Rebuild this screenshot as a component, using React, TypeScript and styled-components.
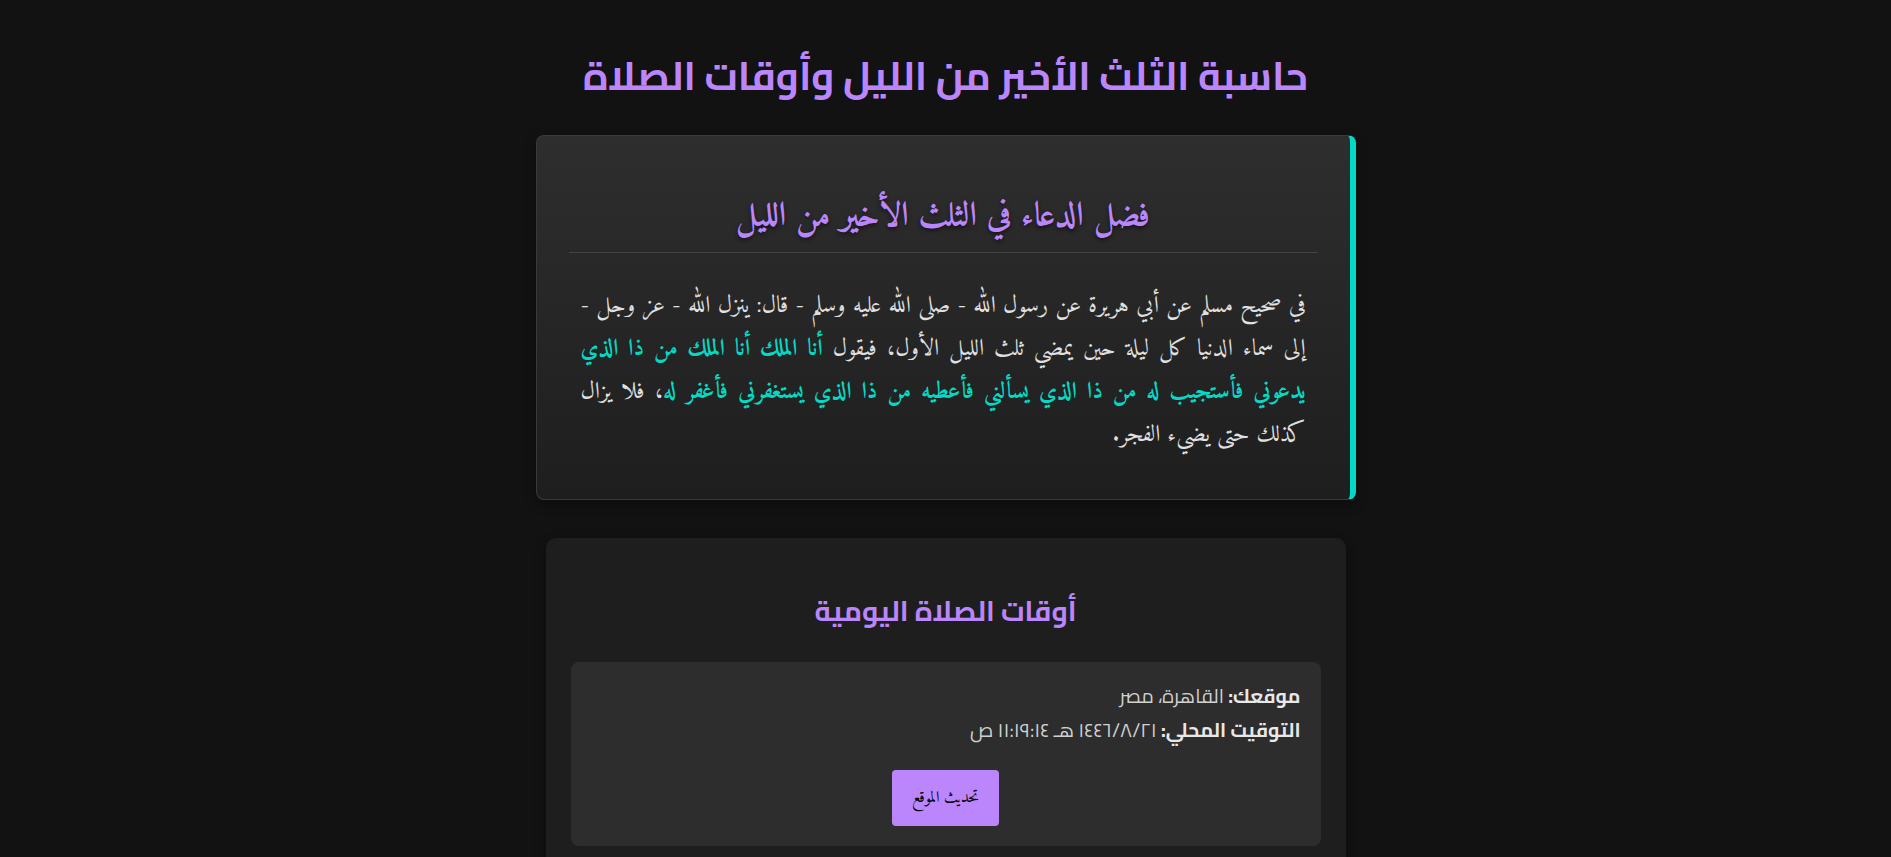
import React from "react";
import styled, { createGlobalStyle } from "styled-components";

const GlobalStyle = createGlobalStyle`
  html, body {
    margin: 0;
    padding: 0;
    background: #121212;
  }
  body {
    color: #e0e0e0;
    font-family: "Cairo", "Noto Sans Arabic", sans-serif;
    direction: rtl;
  }
  * { box-sizing: border-box; }
`;

const Page = styled.main`
  padding: 20px;
  display: flex;
  flex-direction: column;
  align-items: center;
`;

const Title = styled.h1`
  font-family: "Cairo", "Noto Sans Arabic", sans-serif;
  font-weight: 700;
  font-size: 39.5px;
  line-height: 54px;
  color: #bb86fc;
  margin: 29px 0 32px;
  text-align: center;
`;

const HadithCard = styled.section`
  width: 820px;
  padding: 32px;
  background: linear-gradient(180deg, #2e2e2e 0%, #1e1e1e 100%);
  border: 1px solid #3a3a3a;
  border-right: 6px solid #03dac6;
  border-radius: 8px;
  box-shadow: 0 4px 12px rgba(0, 0, 0, 0.35);
`;

const HadithHeading = styled.h2`
  font-family: "Amiri", "Noto Naskh Arabic", serif;
  font-weight: 700;
  font-size: 34px;
  line-height: 48px;
  color: #bb86fc;
  text-align: center;
  margin: 25px 0 0;
  padding-bottom: 11px;
  border-bottom: 1px solid #444;
  text-shadow: 0 2px 4px rgba(0, 0, 0, 0.5);
`;

const HadithText = styled.p`
  font-family: "Amiri", "Noto Naskh Arabic", serif;
  font-size: 23.6px;
  line-height: 43px;
  color: #e0e0e0;
  text-align: justify;
  margin: 32px 0 10px;
  padding: 0 12px;
`;

const Highlight = styled.span`
  color: #03dac6;
  font-weight: 700;
`;

const PrayerCard = styled.section`
  width: 800px;
  margin-top: 38px;
  padding: 25px;
  background: #1e1e1e;
  border-radius: 10px;
  box-shadow: 0 4px 12px rgba(0, 0, 0, 0.3);
`;

const PrayerHeading = styled.h2`
  font-family: "Cairo", "Noto Sans Arabic", sans-serif;
  font-weight: 700;
  font-size: 28px;
  line-height: 42px;
  color: #bb86fc;
  text-align: center;
  margin: 27px 0 30px;
`;

const InfoBox = styled.div`
  background: #2d2d2d;
  border-radius: 8px;
  padding: 20px;
`;

const InfoLine = styled.p`
  font-family: "Cairo", "Noto Sans Arabic", sans-serif;
  font-size: 19.5px;
  line-height: 29px;
  margin: 0 0 5px;
  color: #d0d0d0;
`;

const Label = styled.strong`
  color: #e8e8e8;
  font-weight: 700;
`;

const ButtonRow = styled.div`
  display: flex;
  justify-content: center;
  margin-top: 25px;
`;

const UpdateButton = styled.button`
  font-family: "Amiri", "Noto Naskh Arabic", serif;
  font-size: 16px;
  line-height: 28px;
  color: #000;
  background: #bb86fc;
  border: none;
  border-radius: 4px;
  padding: 14px 20px;
  cursor: pointer;
`;

export default function App() {
  return (
    <>
      <GlobalStyle />
      <Page>
        <Title>حاسبة الثلث الأخير من الليل وأوقات الصلاة</Title>
        <HadithCard>
          <HadithHeading>فضل الدعاء في الثلث الأخير من الليل</HadithHeading>
          <HadithText>
            في صحيح مسلم عن أبي هريرة عن رسول الله - صلى الله عليه وسلم - قال:
            ينزل الله - عز وجل - إلى سماء الدنيا كل ليلة حين يمضي ثلث الليل
            الأول، فيقول{" "}
            <Highlight>
              أنا الملك أنا الملك من ذا الذي يدعوني فأستجيب له من ذا الذي
              يسألني فأعطيه من ذا الذي يستغفرني فأغفر له
            </Highlight>
            ، فلا يزال كذلك حتى يضيء الفجر.
          </HadithText>
        </HadithCard>
        <PrayerCard>
          <PrayerHeading>أوقات الصلاة اليومية</PrayerHeading>
          <InfoBox>
            <InfoLine>
              <Label>موقعك:</Label> القاهرة، مصر
            </InfoLine>
            <InfoLine>
              <Label>التوقيت المحلي:</Label> ١٤٤٦/٨/٢١ هـ ١١:١٩:١٤ ص
            </InfoLine>
            <ButtonRow>
              <UpdateButton>تحديث الموقع</UpdateButton>
            </ButtonRow>
          </InfoBox>
        </PrayerCard>
      </Page>
    </>
  );
}
